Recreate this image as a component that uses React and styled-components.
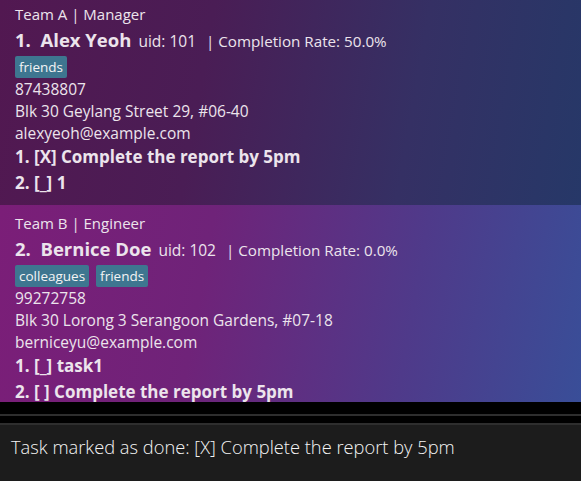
import React from "react";
import styled, { createGlobalStyle } from "styled-components";

const Global = createGlobalStyle`
  html, body { margin: 0; padding: 0; background: #000; }
  body { font-family: "Open Sans", "Noto Sans", sans-serif; overflow: hidden; }
`;

const persons = [
  {
    team: "Team A | Manager",
    name: "Alex Yeoh",
    uid: 101,
    rate: "50.0%",
    tags: ["friends"],
    phone: "87438807",
    address: "Blk 30 Geylang Street 29, #06-40",
    email: "alexyeoh@example.com",
    tasks: ["[X] Complete the report by 5pm", "[_] 1"],
    bg: "linear-gradient(100deg, #521851 0%, #4a1d55 35%, #353064 70%, #263868 100%)",
  },
  {
    team: "Team B | Engineer",
    name: "Bernice Doe",
    uid: 102,
    rate: "0.0%",
    tags: ["colleagues", "friends"],
    phone: "99272758",
    address: "Blk 30 Lorong 3 Serangoon Gardens, #07-18",
    email: "berniceyu@example.com",
    tasks: ["[_] task1", "[ ] Complete the report by 5pm"],
    bg: "linear-gradient(100deg, #7b1e78 0%, #6f2379 35%, #4f3a8a 70%, #394e98 100%)",
  },
];

export default function App() {
  return (
    <>
      <Global />
      <Page>
        <List>
          <Scroller>
            {persons.map((p, i) => (
              <Card key={p.uid} bg={p.bg}>
                <Small>{p.team}</Small>
                <NameRow>
                  <Name>{i + 1}.&nbsp; {p.name}</Name>
                  <Uid>uid: {p.uid}</Uid>
                  <Rate>| Completion Rate: {p.rate}</Rate>
                </NameRow>
                <Tags>
                  {p.tags.map((t) => (
                    <Tag key={t}>{t}</Tag>
                  ))}
                </Tags>
                <Line>{p.phone}</Line>
                <Line>{p.address}</Line>
                <Line>{p.email}</Line>
                {p.tasks.map((t, j) => (
                  <Task key={j}>
                    {j + 1}. {t}
                  </Task>
                ))}
              </Card>
            ))}
          </Scroller>
        </List>
        <Divider />
        <Result>Task marked as done: [X] Complete the report by 5pm</Result>
      </Page>
    </>
  );
}

const Page = styled.div`
  width: 581px;
  height: 481px;
  display: flex;
  flex-direction: column;
  background: #000;
`;

const List = styled.div`
  height: 402px;
  overflow: hidden;
  flex-shrink: 0;
`;

const Scroller = styled.div`
  margin-top: -4px;
`;

const Card = styled.div`
  background: ${(p) => p.bg};
  padding: 4px 15px 6px;
  height: 199px;
  box-sizing: border-box;
  color: #ece4ec;
  &:first-child {
    height: 209px;
  }
`;

const Small = styled.div`
  font-size: 15px;
  line-height: 22px;
  margin-top: 3px;
`;

const NameRow = styled.div`
  display: flex;
  align-items: baseline;
  height: 30px;
  padding-top: 2px;
  box-sizing: border-box;
  white-space: nowrap;
`;

const Name = styled.span`
  font-size: 18.5px;
  font-weight: 700;
  margin-right: 7px;
`;

const Uid = styled.span`
  font-size: 15.5px;
  margin-right: 10px;
`;

const Rate = styled.span`
  font-size: 15.2px;
`;

const Tags = styled.div`
  display: flex;
  gap: 7px;
  margin: 1px 0 0;
`;

const Tag = styled.span`
  background: #3e7690;
  border-radius: 2px;
  font-size: 13.5px;
  line-height: 22px;
  padding: 0 4px;
  color: #f4f4f4;
`;

const Line = styled.div`
  font-size: 15.5px;
  line-height: 22px;
  white-space: nowrap;
`;

const Task = styled.div`
  font-size: 17px;
  font-weight: 700;
  line-height: 26px;
  white-space: nowrap;
`;

const Divider = styled.div`
  height: 23px;
  background: #000;
  display: flex;
  flex-direction: column;
  justify-content: space-between;
  padding-top: 12px;
  box-sizing: border-box;
  &::before,
  &::after {
    content: "";
    height: 2px;
    background: #2e2e2e;
  }
`;

const Result = styled.div`
  flex: 1;
  background: #1c1c1c;
  color: #f4f4f4;
  font-size: 18.3px;
  font-weight: 300;
  padding: 9px 11px;
`;
